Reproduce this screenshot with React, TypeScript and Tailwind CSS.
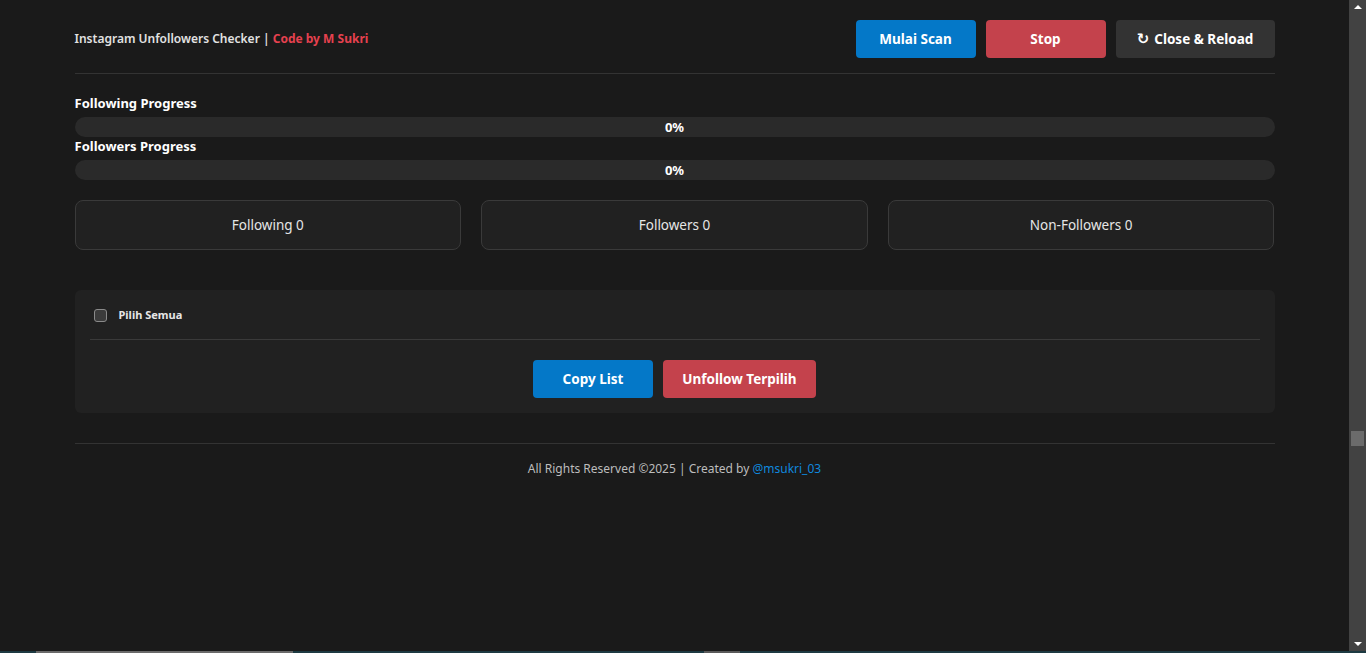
const font = { fontFamily: '"Noto Sans", "Open Sans", sans-serif' };

function ProgressBar({ label }: { label: string }) {
  return (
    <div>
      <div className="h-[18px] text-[13px] leading-[18px] font-bold text-white mb-[5px]">{label}</div>
      <div className="h-5 rounded-full bg-[#2a2a2a] flex items-center justify-center">
        <span className="text-[13px] font-bold text-white leading-none">0%</span>
      </div>
    </div>
  );
}

function StatCard({ label }: { label: string }) {
  return (
    <div className="h-[50px] rounded-lg border border-[#3a3a3a] bg-[#212121] flex items-center justify-center text-[13.5px] text-[#e6e6e6]">
      {label}
    </div>
  );
}

export default function App() {
  return (
    <div className="h-[653px] flex flex-col bg-[#1a1a1a] overflow-hidden" style={font}>
      <div className="flex flex-1 min-h-0">
        <main className="flex-1">
          <div className="w-[1200px] mx-auto pt-5">
            {/* header */}
            <div className="flex items-center justify-between pb-[15px] border-b border-[#333333]">
              <h1 className="text-[12px] font-semibold text-[#e2e2e2]">
                Instagram Unfollowers Checker | <span className="text-[#e5414f] font-bold">Code by M Sukri</span>
              </h1>
              <div className="flex gap-[10px]">
                <button className="w-[120px] h-[38px] rounded bg-[#0478c8] text-white text-[13.5px] font-bold">Mulai Scan</button>
                <button className="w-[120px] h-[38px] rounded bg-[#c4424c] text-white text-[13.5px] font-bold">Stop</button>
                <button className="w-[159px] h-[38px] rounded bg-[#333333] text-white text-[13.5px] font-bold flex items-center justify-center gap-[5px]">
                  <span className="text-[15px] leading-none" style={{ fontFamily: '"DejaVu Sans", sans-serif' }}>↻</span>
                  Close &amp; Reload
                </button>
              </div>
            </div>

            {/* progress */}
            <div className="pt-5 flex flex-col">
              <ProgressBar label="Following Progress" />
              <ProgressBar label="Followers Progress" />
            </div>

            {/* stats */}
            <div className="grid grid-cols-3 gap-5 mt-5">
              <StatCard label="Following 0" />
              <StatCard label="Followers 0" />
              <StatCard label="Non-Followers 0" />
            </div>

            {/* list panel */}
            <div className="mt-10 rounded-md bg-[#212121] p-[15px]">
              <div className="flex items-center h-5 pb-[14px] box-content border-b border-[#3a3a3a]">
                <span className="ml-1 w-[13px] h-[13px] rounded-[3px] border border-[#8a8a8a] bg-[#3b3b3b]" />
                <span className="ml-3 text-[11px] font-bold text-[#e6e6e6]">Pilih Semua</span>
              </div>
              <div className="flex justify-center gap-[10px] mt-5">
                <button className="w-[120px] h-[38px] rounded bg-[#0478c8] text-white text-[13.5px] font-bold">Copy List</button>
                <button className="w-[153px] h-[38px] rounded bg-[#c4424c] text-white text-[13.5px] font-bold">Unfollow Terpilih</button>
              </div>
            </div>

            {/* footer */}
            <div className="mt-[30px] border-t border-[#333333] pt-[15px] text-center text-[12px] leading-5 text-[#bdbdbd]">
              All Rights Reserved ©2025 | Created by <span className="text-[#1088de]">@msukri_03</span>
            </div>
          </div>
        </main>

        {/* scrollbar */}
        <div className="w-[17px] bg-[#424242] flex flex-col items-center justify-between py-[5px] relative">
          <span className="w-0 h-0 border-x-[4px] border-x-transparent border-b-[4px] border-b-white" />
          <span className="absolute left-[2px] top-[431px] w-[13px] h-[15px] bg-[#6b6b6b]" />
          <span className="w-0 h-0 border-x-[4px] border-x-transparent border-t-[4px] border-t-white" />
        </div>
      </div>
      <div className="h-[2px] bg-[#1d3a42] flex">
        <span className="ml-[36px] w-[257px] bg-[#6a6a6a]" />
        <span className="ml-[411px] w-[36px] bg-[#5a5a5a]" />
      </div>
    </div>
  );
}
